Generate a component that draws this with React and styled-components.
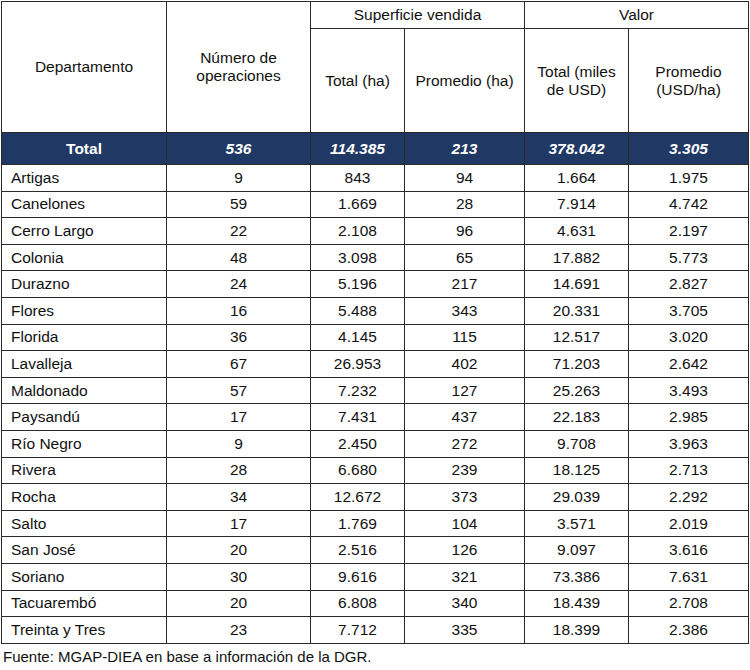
import React from 'react';
import styled, { createGlobalStyle } from 'styled-components';

const GlobalStyle = createGlobalStyle`
  html, body {
    margin: 0;
    padding: 0;
    background: #fff;
  }
  body {
    font-family: "Liberation Sans", Arial, sans-serif;
    color: #111;
  }
`

const Page = styled.div`
  width: 750px;
  padding: 1px 0 0 1px;
  box-sizing: border-box;
`

const Table = styled.table`
  border-collapse: collapse;
  table-layout: fixed;
  width: 747px;
  font-size: 15.5px;
`

const Head = styled.th`
  border: 1px solid #2a2a2a;
  font-weight: 400;
  text-align: center;
  vertical-align: middle;
  line-height: 18px;
  height: ${props => props.h || 'auto'};
  padding: 0 4px;
`

const TotalRow = styled.tr`
  background: #203864;
  color: #fff;
  height: 32px;
  td {
    border: 1px solid #2a2a2a;
    text-align: center;
    font-weight: 700;
    font-style: italic;
  }
  td:first-child {
    font-style: normal;
  }
`

const Row = styled.tr`
  height: 26.6px;
`

const Cell = styled.td`
  border: 1px solid #2a2a2a;
  text-align: ${props => props.left ? 'left' : 'center'};
  padding: ${props => props.left ? '0 0 0 9px' : '0'};
  vertical-align: middle;
`

const Source = styled.p`
  margin: 4px 0 0 2px;
  font-size: 15px;
`

const rows = [
  ['Artigas', '9', '843', '94', '1.664', '1.975'],
  ['Canelones', '59', '1.669', '28', '7.914', '4.742'],
  ['Cerro Largo', '22', '2.108', '96', '4.631', '2.197'],
  ['Colonia', '48', '3.098', '65', '17.882', '5.773'],
  ['Durazno', '24', '5.196', '217', '14.691', '2.827'],
  ['Flores', '16', '5.488', '343', '20.331', '3.705'],
  ['Florida', '36', '4.145', '115', '12.517', '3.020'],
  ['Lavalleja', '67', '26.953', '402', '71.203', '2.642'],
  ['Maldonado', '57', '7.232', '127', '25.263', '3.493'],
  ['Paysandú', '17', '7.431', '437', '22.183', '2.985'],
  ['Río Negro', '9', '2.450', '272', '9.708', '3.963'],
  ['Rivera', '28', '6.680', '239', '18.125', '2.713'],
  ['Rocha', '34', '12.672', '373', '29.039', '2.292'],
  ['Salto', '17', '1.769', '104', '3.571', '2.019'],
  ['San José', '20', '2.516', '126', '9.097', '3.616'],
  ['Soriano', '30', '9.616', '321', '73.386', '7.631'],
  ['Tacuarembó', '20', '6.808', '340', '18.439', '2.708'],
  ['Treinta y Tres', '23', '7.712', '335', '18.399', '2.386'],
]

export default function App() {
  return (
    <Page>
      <GlobalStyle />
      <Table>
        <colgroup>
          <col style={{ width: 165 }} />
          <col style={{ width: 144 }} />
          <col style={{ width: 94 }} />
          <col style={{ width: 120 }} />
          <col style={{ width: 104 }} />
          <col style={{ width: 120 }} />
        </colgroup>
        <thead>
          <tr>
            <Head rowSpan={2}>Departamento</Head>
            <Head rowSpan={2}>Número de<br />operaciones</Head>
            <Head colSpan={2} h="26px">Superficie vendida</Head>
            <Head colSpan={2} h="26px">Valor</Head>
          </tr>
          <tr>
            <Head h="103px">Total (ha)</Head>
            <Head h="103px">Promedio (ha)</Head>
            <Head h="103px">Total (miles<br />de USD)</Head>
            <Head h="103px">Promedio<br />(USD/ha)</Head>
          </tr>
        </thead>
        <tbody>
          <TotalRow>
            <td>Total</td>
            <td>536</td>
            <td>114.385</td>
            <td>213</td>
            <td>378.042</td>
            <td>3.305</td>
          </TotalRow>
          {rows.map(r => (
            <Row key={r[0]}>
              {r.map((v, i) => <Cell key={i} left={i === 0}>{v}</Cell>)}
            </Row>
          ))}
        </tbody>
      </Table>
      <Source>Fuente: MGAP-DIEA en base a información de la DGR.</Source>
    </Page>
  )
}
